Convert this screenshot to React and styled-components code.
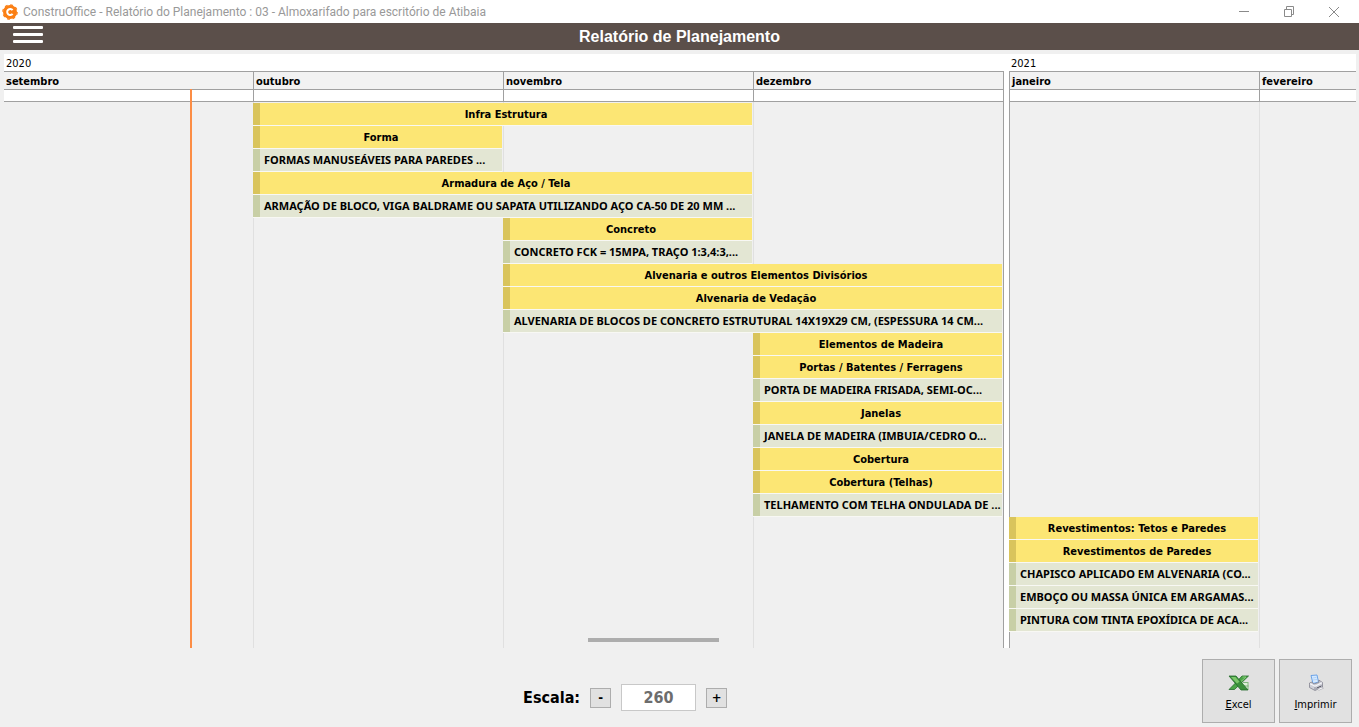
import { useState } from "react";
import styled, { createGlobalStyle } from "styled-components";

const MONTH = 250;

const years = [
  {
    label: "2020",
    months: ["setembro", "outubro", "novembro", "dezembro"],
    today: 186,
    tasks: [
      { row: 1, start: 2, span: 2, group: true, name: "Infra Estrutura" },
      { row: 2, start: 2, span: 1, group: true, name: "Forma" },
      { row: 3, start: 2, span: 1, name: "FORMAS MANUSEÁVEIS PARA PAREDES ..." },
      { row: 4, start: 2, span: 2, group: true, name: "Armadura de Aço / Tela" },
      { row: 5, start: 2, span: 2, name: "ARMAÇÃO DE BLOCO, VIGA BALDRAME OU SAPATA UTILIZANDO AÇO CA-50 DE 20 MM ..." },
      { row: 6, start: 3, span: 1, group: true, name: "Concreto" },
      { row: 7, start: 3, span: 1, name: "CONCRETO FCK = 15MPA, TRAÇO 1:3,4:3,..." },
      { row: 8, start: 3, span: 2, group: true, name: "Alvenaria e outros Elementos Divisórios" },
      { row: 9, start: 3, span: 2, group: true, name: "Alvenaria de Vedação" },
      { row: 10, start: 3, span: 2, name: "ALVENARIA DE BLOCOS DE CONCRETO ESTRUTURAL 14X19X29 CM, (ESPESSURA 14 CM..." },
      { row: 11, start: 4, span: 1, group: true, name: "Elementos de Madeira" },
      { row: 12, start: 4, span: 1, group: true, name: "Portas / Batentes / Ferragens" },
      { row: 13, start: 4, span: 1, name: "PORTA DE MADEIRA FRISADA, SEMI-OC..." },
      { row: 14, start: 4, span: 1, group: true, name: "Janelas" },
      { row: 15, start: 4, span: 1, name: "JANELA DE MADEIRA (IMBUIA/CEDRO O..." },
      { row: 16, start: 4, span: 1, group: true, name: "Cobertura" },
      { row: 17, start: 4, span: 1, group: true, name: "Cobertura (Telhas)" },
      { row: 18, start: 4, span: 1, name: "TELHAMENTO COM TELHA ONDULADA DE ..." },
    ],
  },
  {
    label: "2021",
    months: ["janeiro", "fevereiro"],
    tasks: [
      { row: 19, start: 1, span: 1, group: true, name: "Revestimentos: Tetos e Paredes" },
      { row: 20, start: 1, span: 1, group: true, name: "Revestimentos de Paredes" },
      { row: 21, start: 1, span: 1, name: "CHAPISCO APLICADO EM ALVENARIA (CO..." },
      { row: 22, start: 1, span: 1, name: "EMBOÇO OU MASSA ÚNICA EM ARGAMAS..." },
      { row: 23, start: 1, span: 1, name: "PINTURA COM TINTA EPOXÍDICA DE ACA..." },
    ],
  },
];

const YearBlock = ({ year, last }) => (
  <Year $last={last}>
    <YearLabel>{year.label}</YearLabel>
    <YearBody $last={last}>
      <Months $count={year.months.length}>
        {year.months.map((month) => (
          <Month key={month}>{month}</Month>
        ))}
      </Months>
      <Months $count={year.months.length}>
        {year.months.map((month) => (
          <Day key={month} />
        ))}
      </Months>
      <Rows $count={year.months.length}>
        {year.months.map((month, i) => (
          <Lane key={month} $col={i + 1} $end={!last && i === year.months.length - 1} />
        ))}
        {year.tasks.map((task) => (
          <Bar key={task.row} $row={task.row} $start={task.start} $span={task.span} $group={task.group}>
            {task.name}
          </Bar>
        ))}
      </Rows>
      {year.today && <Today style={{ left: year.today }} />}
    </YearBody>
  </Year>
);

export default function App() {
  const [scale, setScale] = useState(260);

  return (
    <>
      <GlobalStyle />
      <Window>
        <TitleBar>
          <Logo />
          <WindowTitle>ConstruOffice - Relatório do Planejamento : 03 - Almoxarifado para escritório de Atibaia</WindowTitle>
          <WindowButtons>
            <WindowBtn aria-label="Minimizar">
              <svg width="12" height="12" viewBox="0 0 12 12">
                <path d="M1 5.5h10" />
              </svg>
            </WindowBtn>
            <WindowBtn aria-label="Restaurar">
              <svg width="12" height="12" viewBox="0 0 12 12">
                <path d="M1.5 3.5h7v7h-7zM3.5 3.500v-3h7v8h-2" />
              </svg>
            </WindowBtn>
            <WindowBtn aria-label="Fechar">
              <svg width="12" height="12" viewBox="0 0 12 12">
                <path d="M1 1l10 10M11 1L1 11" />
              </svg>
            </WindowBtn>
          </WindowButtons>
        </TitleBar>
        <Header>
          <MenuBtn aria-label="Menu">
            <MenuLine />
            <MenuLine />
            <MenuLine />
          </MenuBtn>
          <Title>Relatório de Planejamento</Title>
        </Header>
        <Timeline>
          {years.map((year, i) => (
            <YearBlock key={year.label} year={year} last={i === years.length - 1} />
          ))}
          <ScrollThumb />
        </Timeline>
        <Footer>
          <Scale>
            <ScaleLabel htmlFor="escala">Escala:</ScaleLabel>
            <StepBtn onClick={() => setScale(scale - 10)}>-</StepBtn>
            <ScaleInput id="escala" value={scale} onChange={(e) => setScale(Number(e.target.value) || 0)} />
            <StepBtn onClick={() => setScale(scale + 10)}>+</StepBtn>
          </Scale>
          <Actions>
            <ActionBtn>
              <ExcelIcon />
              <span>
                <u>E</u>xcel
              </span>
            </ActionBtn>
            <ActionBtn>
              <PrinterIcon />
              <span>
                <u>I</u>mprimir
              </span>
            </ActionBtn>
          </Actions>
        </Footer>
      </Window>
    </>
  );
}

const Logo = () => (
  <svg width="16" height="16" viewBox="0 0 16 16">
    <circle cx="8" cy="8" r="7" fill="#fb7f14" />
    <circle cx="8" cy="8" r="7.200" fill="none" stroke="#fb7f14" strokeWidth="1.2" strokeDasharray="2.83 2.83" />
    <path d="M10.6 6.2A3 3 0 1 0 10.6 9.8" fill="none" stroke="#fff" strokeWidth="2" />
  </svg>
);

const ExcelIcon = () => (
  <svg width="22" height="18" viewBox="0 0 22 18">
    <path d="M13 9l7-1v8h-7z" fill="#dcefd9" />
    <path d="M15 8.500h5.500M16 12h4.500M20 9v7" fill="none" stroke="#6aa868" strokeWidth="0.8" />
    <path d="M14 2h6.500l-14 13.500H1L8 8.500z" fill="#4ba548" stroke="#256b2c" strokeWidth="0.8" />
    <path d="M1 2h7l12 14h-7z" fill="#3b8f3c" stroke="#256b2c" strokeWidth="0.8" />
    <path d="M3 3h4.500l4 4.800-2.500 1.700z" fill="#7cc86a" />
    <path d="M14.500 3h3.500l-5 4.500" fill="none" stroke="#86cc78" />
  </svg>
);

const PrinterIcon = () => (
  <svg width="18" height="18" viewBox="0 0 18 18">
    <path d="M4 1.500L10 1l1.500 7L6 9.500z" fill="#d6eaff" stroke="#5f9be6" strokeWidth="0.9" />
    <path d="M5.500 4l4-.6M6 6l4-.6" stroke="#a9cdf5" strokeWidth="0.8" />
    <path d="M2.500 9L5 8l1.500 2L12 8.500l-.3-2.500L15.500 8.500V13L8 16.500 2.500 13.500z" fill="#cfd0d8" stroke="#83838f" strokeWidth="0.8" />
    <path d="M3 9.800L8 12.200l7-3.400" fill="none" stroke="#f6f6fa" strokeWidth="1.200" />
    <path d="M8 13v3" stroke="#83838f" strokeWidth="0.8" />
    <path d="M9.500 14.200l5-2.300" stroke="#4b4b58" />
    <path d="M10 15.200l4.500-2 2 1-4.500 2z" fill="#fff" stroke="#9494a0" strokeWidth="0.5" />
  </svg>
);

const GlobalStyle = createGlobalStyle`
  * {
    box-sizing: border-box;
  }
  body {
    margin: 0;
    background: #f0f0f0;
    color: #000;
    font-family: "DejaVu Sans Condensed", "Noto Sans", sans-serif;
    font-size: 11px;
  }
  button,
  input {
    font-family: inherit;
    color: inherit;
    padding: 0;
  }
`;
const Window = styled.div`
  min-height: 100vh;
  display: flex;
  flex-direction: column;
`;
const TitleBar = styled.div`
  height: 23px;
  padding: 0 3px 0 2px;
  display: flex;
  align-items: center;
  background: white;
`;
const WindowTitle = styled.div`
  flex: 1;
  margin-left: 5px;
  font-family: Roboto, sans-serif;
  font-size: 12px;
  color: #999;
  white-space: nowrap;
`;
const WindowButtons = styled.div`
  display: flex;
`;
const WindowBtn = styled.button`
  width: 45px;
  height: 20px;
  display: flex;
  align-items: center;
  justify-content: center;
  border: none;
  background: none;

  svg {
    fill: none;
    stroke: #8a8a8a;
  }
`;
const Header = styled.div`
  height: 27px;
  padding: 0 13px;
  display: grid;
  grid-template-columns: 1fr auto 1fr;
  align-items: center;
  background: #5b4f4a;
`;
const MenuBtn = styled.button`
  width: 30px;
  height: 21px;
  display: flex;
  flex-direction: column;
  gap: 4px;
  border: none;
  background: none;
`;
const MenuLine = styled.span`
  width: 30px;
  height: 3px;
  border-radius: 1px;
  background: white;
`;
const Title = styled.h1`
  margin: 0;
  font-family: "Liberation Sans", sans-serif;
  font-size: 16px;
  color: white;
`;
const Timeline = styled.div`
  position: relative;
  flex: 1;
  margin: 4px 3px 0 4px;
  display: flex;
  overflow: hidden;
`;
const Year = styled.div`
  flex: ${(props) => (props.$last ? "1" : "none")};
  min-width: 0;
  display: flex;
  flex-direction: column;
  padding-right: ${(props) => (props.$last ? "0" : "5px")};
  background: white;
`;
const YearLabel = styled.div`
  height: 17px;
  padding: 0 2px;
  line-height: 19px;
`;
const YearBody = styled.div`
  position: relative;
  flex: 1;
  display: flex;
  flex-direction: column;
  border-left: ${(props) => (props.$last ? "1px solid #a0a0a0" : "none")};
`;
const Months = styled.div`
  display: grid;
  grid-template-columns: repeat(${(props) => props.$count}, ${MONTH}px);
`;
const Month = styled.div`
  height: 18px;
  padding: 0 2px;
  line-height: 19px;
  font-weight: bold;
  background: #f2f2f2;
  border-top: 1px solid #a0a0a0;
  border-right: 1px solid #a0a0a0;
`;
const Day = styled.div`
  height: 13px;
  background: white;
  border: 1px solid #a0a0a0;
  border-left: none;
`;
const Rows = styled.div`
  flex: 1;
  display: grid;
  grid-template-columns: repeat(${(props) => props.$count}, ${MONTH}px);
  grid-template-rows: repeat(23, 22px) 1fr;
  row-gap: 1px;
  padding-top: 1px;
  background: #f0f0f0;
`;
const Lane = styled.div`
  grid-row: 1 / -1;
  grid-column: ${(props) => props.$col};
  margin-top: -1px;
  border-right: 1px solid ${(props) => (props.$end ? "#a0a0a0" : "#e0e0e0")};
`;
const Bar = styled.div`
  grid-row: ${(props) => props.$row};
  grid-column: ${(props) => props.$start} / span ${(props) => props.$span};
  margin: 0 2px 0 -1px;
  padding-left: ${(props) => (props.$group ? "0" : "4px")};
  border-left: 7px solid ${(props) => (props.$group ? "#d9c45c" : "#c8cfa6")};
  background: ${(props) => (props.$group ? "#fce674" : "#e3e6d3")};
  box-shadow: 0 1px #f8f8f4;
  font-family: ${(props) => (props.$group ? "inherit" : '"Noto Sans", sans-serif')};
  line-height: ${(props) => (props.$group ? "24px" : "22px")};
  font-weight: bold;
  text-align: ${(props) => (props.$group ? "center" : "left")};
  white-space: nowrap;
  overflow: hidden;
`;
const Today = styled.div`
  position: absolute;
  top: 18px;
  bottom: 0;
  width: 2px;
  background: #fc8d45;
`;
const ScrollThumb = styled.div`
  position: absolute;
  left: 43.2%;
  bottom: 6px;
  width: 131px;
  height: 4px;
  background: #adadad;
`;
const Footer = styled.div`
  height: 79px;
  padding: 0 7px;
  display: flex;
  align-items: center;
  justify-content: space-between;
`;
const Scale = styled.div`
  margin-left: 38%;
  display: flex;
  align-items: center;
  gap: 10px;
  padding-top: 20px;
`;
const ScaleLabel = styled.label`
  width: 62px;
  font-size: 16px;
  font-weight: bold;
  text-align: right;
`;
const StepBtn = styled.button`
  width: 21px;
  height: 20px;
  border: 1px solid #adadad;
  background: #e1e1e1;
  font-size: 13px;
  font-weight: bold;
  line-height: 16px;
`;
const ScaleInput = styled.input`
  width: 75px;
  height: 27px;
  border: 1px solid #c8c8c8;
  background: white;
  color: #6d6d6d;
  font-size: 16px;
  font-weight: bold;
  text-align: center;
`;
const Actions = styled.div`
  display: flex;
  gap: 4px;
  padding-top: 7px;
`;
const ActionBtn = styled.button`
  width: 73px;
  height: 64px;
  padding-top: 2px;
  display: flex;
  flex-direction: column;
  align-items: center;
  justify-content: center;
  gap: 6px;
  border: 1px solid #adadad;
  background: #e1e1e1;
  font-size: 11px;
`;
